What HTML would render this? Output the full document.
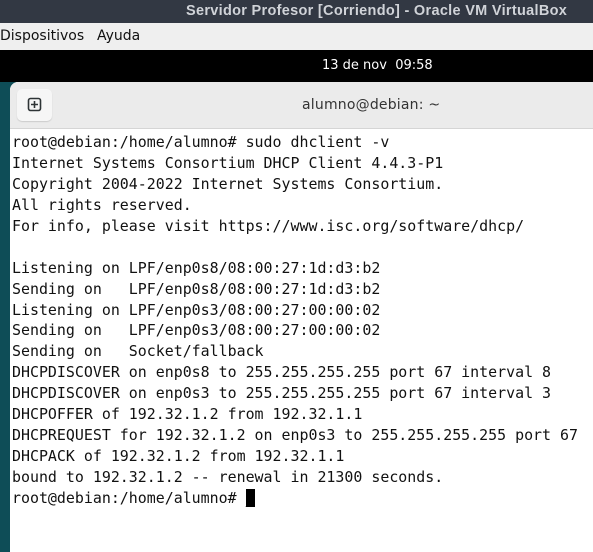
<!DOCTYPE html>
<html><head><style>
body{margin:0;width:593px;height:539px;overflow:hidden;background:#0e4d57;position:relative;font-family:"DejaVu Sans","Liberation Sans",sans-serif}
#t{position:absolute;left:0;top:0;width:593px;height:23px;background:#323843;color:#d0d3d8;font-weight:bold;font-size:14.5px;line-height:23px;font-family:"Liberation Sans",sans-serif}
#t span{position:absolute;left:186px;white-space:nowrap;letter-spacing:0.3px}
#m{position:absolute;left:0;top:23px;width:593px;height:27px;background:#efefef;font-size:14px;line-height:27px;color:#111}
#b{position:absolute;left:0;top:50px;width:593px;height:32px;background:#000;color:#fff;font-size:13px;line-height:32px}
#w{position:absolute;left:10px;top:82px;width:600px;height:470px;background:#fff;border-top-left-radius:8px;overflow:hidden}
#h{height:46px;background:#ebebeb;border-bottom:1px solid #d5d5d5;position:relative}
#btn{position:absolute;left:7px;top:7px;width:35px;height:32px;background:#f6f6f6;border-radius:5px;box-shadow:0 1px 1px #ccc}
#h .tt{position:absolute;left:292px;top:0;line-height:46px;font-size:14px;color:#333;letter-spacing:0.2px;white-space:nowrap}
pre{margin:0;position:absolute;left:2px;top:50px;font-family:"DejaVu Sans Mono","Liberation Mono",monospace;font-size:14.93px;line-height:20.94px;color:#111}
.cur{background:#000;color:#000}
</style></head><body>
<div id="t"><span>Servidor Profesor [Corriendo] - Oracle VM VirtualBox</span></div>
<div id="m"><span style="position:absolute;left:0">Dispositivos</span><span style="position:absolute;left:97px">Ayuda</span></div>
<div id="b"><span style="position:absolute;left:322px">13 de nov&nbsp; 09:58</span></div>
<div id="w">
<div id="h"><div id="btn"><svg width="35" height="32"><rect x="11.5" y="9.5" width="12" height="12" rx="2" fill="none" stroke="#2e3436" stroke-width="1.6"/><path d="M17.5 12v7M14 15.5h7" stroke="#2e3436" stroke-width="1.6"/></svg></div><span class="tt">alumno@debian: ~</span></div>
<pre>root@debian:/home/alumno# sudo dhclient -v
Internet Systems Consortium DHCP Client 4.4.3-P1
Copyright 2004-2022 Internet Systems Consortium.
All rights reserved.
For info, please visit https://www.isc.org/software/dhcp/

Listening on LPF/enp0s8/08:00:27:1d:d3:b2
Sending on   LPF/enp0s8/08:00:27:1d:d3:b2
Listening on LPF/enp0s3/08:00:27:00:00:02
Sending on   LPF/enp0s3/08:00:27:00:00:02
Sending on   Socket/fallback
DHCPDISCOVER on enp0s8 to 255.255.255.255 port 67 interval 8
DHCPDISCOVER on enp0s3 to 255.255.255.255 port 67 interval 3
DHCPOFFER of 192.32.1.2 from 192.32.1.1
DHCPREQUEST for 192.32.1.2 on enp0s3 to 255.255.255.255 port 67
DHCPACK of 192.32.1.2 from 192.32.1.1
bound to 192.32.1.2 -- renewal in 21300 seconds.
root@debian:/home/alumno# <span class="cur">_</span></pre>
</div>
</body></html>
